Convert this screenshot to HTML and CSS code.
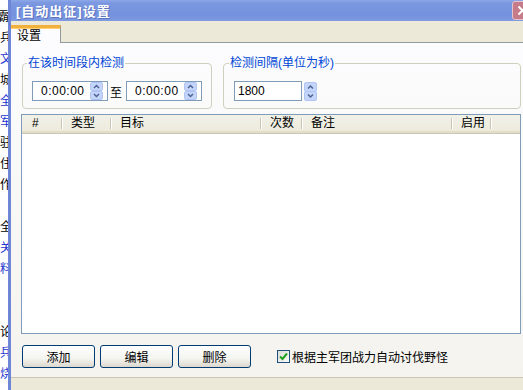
FILE: index.html
```html
<!DOCTYPE html>
<html lang="zh-CN">
<head>
    <meta charset="UTF-8">
    <title>[自动出征]设置</title>
    <link rel="stylesheet" href="styles.css">
</head>
<body>
    <!-- window behind the dialog, only its edge shows -->
    <div class="desk">霸<br>兵<br><span class="lnk">文</span><br>城<br><span class="lnk">全</span><br><span class="lnk">军</span><br>驻<br>住<br>作<br>&nbsp;<br>全<br><span class="lnk">关</span><br><span class="lnk">料</span><br>&nbsp;<br>&nbsp;<br>论<br><span class="lnk">兵</span><br><span class="lnk">烧</span></div>

    <div class="frame">
        <div class="titlebar">
            <span class="title">[自动出征]设置</span>
            <span class="close">
                <svg width="11" height="11" viewBox="0 0 11 11"><path d="M1.5 1.5 L9.5 9.5 M9.5 1.5 L1.5 9.5" stroke="#fff" stroke-width="2"/></svg>
            </span>
        </div>

        <div class="tabs">
            <div class="tab">设置</div>
        </div>

        <div class="panel">
            <div class="groups">
                <fieldset class="group g-time">
                    <legend>在该时间段内检测</legend>
                    <div class="row">
                        <div class="dt">
                            <span class="val">0:00:00</span>
                            <svg class="spin" width="13" height="18" viewBox="0 0 13 18"><rect x="0.5" y="0.5" width="12" height="8" rx="1.5" fill="#c4d4fb" stroke="#b2c5f2"/><rect x="0.5" y="9.5" width="12" height="8" rx="1.5" fill="#c4d4fb" stroke="#b2c5f2"/><path d="M4 6 L6.5 3.5 L9 6 M4 12 L6.5 14.5 L9 12" fill="none" stroke="#4d6391" stroke-width="1.5"/></svg>
                        </div>
                        <span class="to">至</span>
                        <div class="dt">
                            <span class="val">0:00:00</span>
                            <svg class="spin" width="13" height="18" viewBox="0 0 13 18"><rect x="0.5" y="0.5" width="12" height="8" rx="1.5" fill="#c4d4fb" stroke="#b2c5f2"/><rect x="0.5" y="9.5" width="12" height="8" rx="1.5" fill="#c4d4fb" stroke="#b2c5f2"/><path d="M4 6 L6.5 3.5 L9 6 M4 12 L6.5 14.5 L9 12" fill="none" stroke="#4d6391" stroke-width="1.5"/></svg>
                        </div>
                    </div>
                </fieldset>

                <fieldset class="group g-gap">
                    <legend>检测间隔(单位为秒)</legend>
                    <div class="row">
                        <div class="num">1800</div>
                        <svg class="num-spin" width="13" height="19" viewBox="0 0 13 19"><rect x="0.5" y="0.5" width="12" height="9" rx="1.5" fill="#c4d4fb" stroke="#b2c5f2"/><rect x="0.5" y="9.5" width="12" height="9" rx="1.5" fill="#c4d4fb" stroke="#b2c5f2"/><path d="M4 6.5 L6.5 4 L9 6.5 M4 12.5 L6.5 15 L9 12.5" fill="none" stroke="#4d6391" stroke-width="1.5"/></svg>
                    </div>
                </fieldset>
            </div>

            <div class="list">
                <div class="list-head">
                    <span class="col c-id">#</span>
                    <span class="col">类型</span>
                    <span class="col">目标</span>
                    <span class="col">次数</span>
                    <span class="col">备注</span>
                    <span class="col">启用</span>
                    <span class="col last"></span>
                </div>
            </div>

            <div class="actions">
                <button class="btn">添加</button>
                <button class="btn">编辑</button>
                <button class="btn">删除</button>
                <label class="check">
                    <span class="box">
                        <svg width="9" height="9" viewBox="0 0 9 9"><path d="M1 4.5 L3.5 7 L8 1.5" fill="none" stroke="#21a121" stroke-width="2"/></svg>
                    </span>
                    根据主军团战力自动讨伐野怪
                </label>
            </div>
        </div>
    </div>
</body>
</html>
```

FILE: styles.css
```css
body {
    margin: 0;
    width: 523px;
    height: 390px;
    overflow: hidden;
    display: flex;
    background: #fff;
    font-family: "Liberation Sans", "Noto Sans CJK SC", sans-serif;
    font-size: 12px;
    color: #000;
}

/* the other window peeking out on the left */
.desk {
    flex: none;
    width: 8px;
    overflow: hidden;
    padding-top: 5px;
    line-height: 21px;
    white-space: nowrap;
    text-indent: -3px;
    font-family: "Noto Sans CJK SC", sans-serif;
}

.desk .lnk {
    color: #2233cc;
}

.frame {
    flex: none;
    width: 522px;
    border-left: 3px solid #6f86d6;
    display: flex;
    flex-direction: column;
    background: #ece9d8;
}

.titlebar {
    height: 21px;
    display: flex;
    align-items: center;
    background: linear-gradient(#8da8e8 0, #7b97e0 3px, #7391dd 70%, #7f9ae1 100%);
}

.title {
    padding-left: 5px;
    color: #fff;
    font-weight: bold;
    font-size: 13px;
    letter-spacing: 1px;
    text-shadow: 1px 1px 0 #5b72c0;
}

.close {
    margin-left: auto;
    width: 21px;
    height: 19px;
    display: flex;
    align-items: center;
    justify-content: center;
    background: #c57b89;
    border: 1px solid #e8c3cc;
    border-radius: 3px;
    box-sizing: border-box;
}

.tabs {
    height: 21px;
    display: flex;
    align-items: flex-end;
    border-bottom: 1px solid #919b9c;
}

.tab {
    position: relative;
    width: 50px;
    height: 18px;
    margin-bottom: -1px;
    padding-left: 6px;
    box-sizing: border-box;
    line-height: 17px;
    background: #fcfcfe;
    border-top: 3px solid #f2b13d;
    border-right: 1px solid #919b9c;
    box-shadow: inset 0 1px 0 #ffd27a;
}

.panel {
    height: 335px;
    padding: 14px 0 0 10px;
    box-sizing: border-box;
    background: linear-gradient(#fcfcfe, #f4f3ee);
    border-bottom: 1px solid #c9c6b6;
}

.groups {
    display: flex;
    gap: 11px;
    margin-left: 1px;
}

.group {
    margin: 0;
    min-width: 0;
    padding: 11px 9px 7px;
    border: 1px solid #d0d0bf;
    border-radius: 4px;
    box-sizing: border-box;
}

.g-time {
    width: 190px;
}

.g-gap {
    width: 298px;
    padding-left: 10px;
}

.group legend {
    margin-left: -5px;
    padding: 0 1px;
    line-height: 13px;
    color: #0046d5;
}

.row {
    display: flex;
    align-items: center;
}

.dt {
    display: flex;
    align-items: center;
    width: 76px;
    height: 20px;
    border: 1px solid #7f9db9;
    background: #fff;
    box-sizing: border-box;
}

.dt .val {
    flex: 1;
    padding-left: 8px;
    letter-spacing: 0.5px;
}

.dt .spin {
    margin-right: 4px;
}

.to {
    margin: 0 4px 0 2px;
}

.num {
    width: 68px;
    height: 20px;
    padding-left: 3px;
    line-height: 18px;
    border: 1px solid #7f9db9;
    background: #fff;
    box-sizing: border-box;
}

.num-spin {
    margin-left: 2px;
}

.list {
    width: 500px;
    height: 220px;
    margin-top: 5px;
    border: 1px solid #7f9db9;
    background: #fff;
    box-sizing: border-box;
}

.list-head {
    display: grid;
    grid-template-columns: 40px 49px 150px 41px 150px 39px 1fr;
    height: 18px;
    background: linear-gradient(#f2f1e8, #ebeadb);
    border-bottom: 1px solid #cbc7b8;
    box-shadow: inset 0 -2px 0 #e2dec9;
}

.col {
    position: relative;
    padding-left: 9px;
    line-height: 17px;
}

.c-id {
    padding-left: 10px;
}

.col::after {
    content: "";
    position: absolute;
    right: 0;
    top: 3px;
    bottom: 4px;
    width: 1px;
    background: #c8c5b3;
    box-shadow: 1px 0 0 #fff;
}

.col.last::after {
    display: none;
}

.actions {
    display: flex;
    align-items: center;
    gap: 5px;
    margin: 11px 0 0 1px;
}

.btn {
    width: 73px;
    height: 23px;
    padding: 0;
    font: inherit;
    color: #000;
    border: 1px solid #003c74;
    border-radius: 3px;
    background: linear-gradient(#ffffff, #f4f4f0 60%, #dcd8cd);
}

.check {
    display: flex;
    align-items: center;
    gap: 2px;
    margin-left: 21px;
}

.box {
    width: 13px;
    height: 13px;
    display: flex;
    align-items: center;
    justify-content: center;
    border: 1px solid #1c5180;
    box-sizing: border-box;
    background: linear-gradient(135deg, #dcdcd6, #fbfbf8);
}
```
